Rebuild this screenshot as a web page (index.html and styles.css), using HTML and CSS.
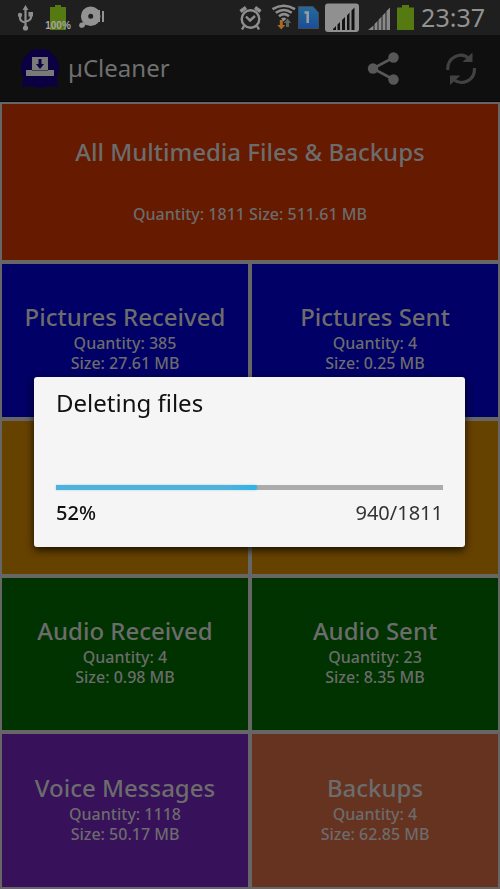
FILE: index.html
```html
<!DOCTYPE html>
<html lang="en">
<head>
<meta charset="utf-8">
<meta name="viewport" content="width=device-width, initial-scale=1">
<title>µCleaner</title>
<link rel="stylesheet" href="styles.css">
</head>
<body>
<div class="screen">
  <div class="status-bar">
    <div class="status-group notices">
      <svg width="25" height="35" viewBox="13 0 25 35" aria-hidden="true">
        <g fill="none" stroke="#8e8e8e" stroke-width="2.200"><path d="M25.500 9v18M20 15v3q0 3.500 5.500 4.500M31 14v3q0 3.500-5.500 4.500"/></g>
        <g fill="#8e8e8e"><path d="M25.500 5l3 5h-6z"/><circle cx="20" cy="15" r="2.200"/><path d="M28.500 12h4.500v4.500h-4.500z"/><circle cx="25.500" cy="28" r="2.600"/></g>
      </svg>
      <div class="charge">
        <svg width="26" height="35" viewBox="45 0 26 35" aria-hidden="true"><path fill="#567a12" d="M50 7h5V5h6v2h5v23H50z"/></svg>
        <span class="charge-label">100%</span>
      </div>
      <svg width="27" height="35" viewBox="78 0 27 35" aria-hidden="true">
        <path fill="#929292" fill-rule="evenodd" d="M90.700 6.500a9.800 9.800 0 1 1 0 19.600 9.800 9.800 0 0 1 0-19.600zM90.700 13.700a2.500 2.500 0 1 0 0 5 2.500 2.500 0 0 0 0-5z"/>
        <circle cx="81.800" cy="25.200" r="2.600" fill="#929292"/>
        <path fill="#929292" d="M82 22l4 2-2 3zM102 11h2v11h-2zM98 10h2v12h-2z"/>
      </svg>
    </div>
    <div class="status-group">
      <svg width="29" height="35" viewBox="236 0 29 35" aria-hidden="true">
        <g fill="none" stroke="#8e8e8e" stroke-width="2.400"><circle cx="248.500" cy="19" r="8.800"/><path d="M244 16.500l4 4 5-4.500M242 26l-2 3.500M255 26l2 3.500"/><path stroke-width="3.600" d="M238.500 11.500l5.500-4M258.500 11.500l-5.500-4"/></g>
      </svg>
      <svg width="30" height="35" viewBox="265 0 30 35" aria-hidden="true">
        <g fill="none" stroke="#8e8e8e" stroke-width="2.600"><path d="M270.500 9.200q11.300-7 22.500 0M273.800 12.800q8-5.600 16 0M277 16.200q5-4 10 0"/></g>
        <path fill="#8e8e8e" d="M279 18.500q3-2 5.500 0l-3 3z"/>
        <path fill="#a66a23" d="M277.800 20h3v5h2.500l-4 4.500-4-4.500h2.500z"/>
        <path fill="#626262" d="M285.500 18.500l3.700 4.500h-2.200v4h-3v-4h-2.200z"/>
      </svg>
      <svg width="25" height="35" viewBox="295 0 25 35" aria-hidden="true">
        <defs><linearGradient id="sim" x2="0" y2="1"><stop stop-color="#236b9c"/><stop offset="1" stop-color="#1b4d9a"/></linearGradient></defs>
        <path fill="url(#sim)" stroke="#454b52" d="M296.500 6.500h14.500l5.500 6v16h-20z"/>
        <path fill="none" stroke="#9b9b9b" stroke-width="2.600" d="M302.500 12.500h3.200V23"/>
      </svg>
      <svg width="41" height="35" viewBox="320 0 41 35" aria-hidden="true">
        <rect x="323" y="3.500" width="34" height="28.500" rx="3" fill="#909090"/>
        <path fill="#111" d="M331 30v-1l3-3v4zM335.500 30v-5.500l2.500-2.500v8zM340 30v-10l3-3v13zM345 30V15.500l2.500-3V30zM349.500 30V10.500l3-3V30z"/>
      </svg>
      <svg width="30" height="35" viewBox="361 0 30 35" aria-hidden="true">
        <path fill="#898989" d="M366 30l5.500-4.500V30zM372.500 30v-6l3-3v9zM376.500 30V20l3-3.500V30zM380.500 30V15.500l3-3V30zM384.500 30V11l3.500-3.500V30z"/>
      </svg>
      <svg width="26" height="35" viewBox="391 0 26 35" aria-hidden="true"><path fill="#567a12" d="M395 7.500h5V5h7v2.500h5V30h-17z"/></svg>
      <time class="clock">23:37</time>
    </div>
  </div>

  <header class="app-bar">
    <svg class="logo" width="40" height="40" viewBox="20 48 40 40" aria-hidden="true">
      <path fill="#0b0042" d="M40 49a19 19 0 0 1 16.500 28.500Q56 83 59 87.500q-4.500-2-9.500-1.500-9.500 3.500-19 0-5-.5-9.500 1.500 3-4.500 2.500-10A19 19 0 0 1 40 49z"/>
      <path fill="#7a7a7a" d="M32 57h16v13h6v6H26v-6h6z"/>
      <path fill="#444" d="M32 70h16v1H32z"/>
      <path fill="#0b0042" d="M38.500 59h3v5h2.500l-4 5-4-5h2.500z"/>
    </svg>
    <h1 class="app-title">µCleaner</h1>
    <button class="action" aria-label="Share">
      <svg width="36" height="40" viewBox="366 48 36 40" aria-hidden="true">
        <path fill="none" stroke="#585858" stroke-width="2.600" d="M393.500 57.500L373 68.500l20.500 11"/>
        <g fill="#585858"><circle cx="393.500" cy="57.500" r="5.200"/><circle cx="373" cy="68.500" r="5.200"/><circle cx="393.500" cy="79.500" r="5.200"/></g>
      </svg>
    </button>
    <button class="action" aria-label="Refresh">
      <svg width="36" height="40" viewBox="443 48 36 40" aria-hidden="true">
        <path fill="none" stroke="#414141" stroke-width="3.200" d="M447.700 70C447 57 461 51 469 58.500M474.500 68C475 81 462 86 453.500 79.500"/>
        <path fill="#414141" d="M472.500 52.500V62h-10zM450 85V75.500h10.500z"/>
      </svg>
    </button>
  </header>

  <main class="tiles">
    <button class="tile all"><span class="name">All Multimedia Files &amp; Backups</span><span class="detail">Quantity: 1811 Size: 511.61 MB</span></button>
    <button class="tile pictures"><span class="name">Pictures Received</span><span class="detail">Quantity: 385</span><span class="detail">Size: 27.61 MB</span></button>
    <button class="tile pictures"><span class="name">Pictures Sent</span><span class="detail">Quantity: 4</span><span class="detail">Size: 0.25 MB</span></button>
    <button class="tile videos" aria-label="Videos"></button>
    <button class="tile videos" aria-label="Videos"></button>
    <button class="tile audio"><span class="name">Audio Received</span><span class="detail">Quantity: 4</span><span class="detail">Size: 0.98 MB</span></button>
    <button class="tile audio"><span class="name">Audio Sent</span><span class="detail">Quantity: 23</span><span class="detail">Size: 8.35 MB</span></button>
    <button class="tile voice"><span class="name">Voice Messages</span><span class="detail">Quantity: 1118</span><span class="detail">Size: 50.17 MB</span></button>
    <button class="tile backups"><span class="name">Backups</span><span class="detail">Quantity: 4</span><span class="detail">Size: 62.85 MB</span></button>
  </main>
</div>

<div class="overlay">
  <section class="dialog" role="dialog" aria-labelledby="dialog-title">
    <h2 class="dialog-title" id="dialog-title">Deleting files</h2>
    <progress class="bar" value="52" max="100" aria-labelledby="dialog-title"></progress>
    <div class="figures"><strong>52%</strong><span class="count">940/1811</span></div>
  </section>
</div>
</body>
</html>
```

FILE: styles.css
```css
* { box-sizing: border-box; }

body {
  margin: 0;
  background: #0f0f0f;
  color: #707070;
  font-family: "Noto Sans", "Open Sans", sans-serif;
}

button {
  margin: 0;
  padding: 0;
  border: 0;
  background: none;
  color: inherit;
  font: inherit;
}

svg { display: block; }

.screen {
  display: flex;
  flex-direction: column;
  min-height: 100vh;
}

.status-bar {
  display: flex;
  justify-content: space-between;
  height: 35px;
  padding: 0 15px 0 13px;
  background: #1f1f1f;
}

.status-group {
  display: flex;
  align-items: center;
}

.notices { gap: 7px; }

.charge { position: relative; }

.charge-label {
  position: absolute;
  inset: auto 0 4px;
  color: #a5a5a5;
  font-family: "Liberation Sans", sans-serif;
  font-size: 10px;
  font-weight: 700;
  line-height: 10px;
  text-align: center;
}

.clock {
  padding-left: 2px;
  color: #929292;
  font-size: 25px;
  line-height: 35px;
}

.app-bar {
  display: flex;
  align-items: center;
  height: 67px;
  padding: 0 21px 0 20px;
  border-bottom: 1px solid #050505;
}

.app-title {
  flex: 1;
  margin: 0;
  padding-left: 8px;
  font-size: 24px;
  font-weight: 400;
  line-height: 32px;
}

.action + .action { margin-left: 41px; }

.tiles {
  flex: 1;
  display: grid;
  grid-template-columns: 1fr 1fr;
  grid-template-rows: 156px;
  grid-auto-rows: 1fr;
  gap: 4px;
  padding: 2px;
  background: #666;
}

.tile {
  display: flex;
  flex-direction: column;
  align-items: center;
  justify-content: center;
  padding-bottom: 6px;
  color: #6c6c6c;
}

.name {
  font-size: 24px;
  font-weight: 500;
  line-height: 32px;
}

.detail {
  font-size: 16px;
  font-weight: 500;
  line-height: 20px;
}

.all {
  grid-column: 1 / -1;
  gap: 36px;
  padding-bottom: 4px;
  background: #661a00;
}

.pictures { background: #000066; }
.videos { background: #664200; }
.audio { background: #003300; }
.voice { background: #37115a; }
.backups { background: #663320; }

.overlay {
  position: fixed;
  inset: 35px 0 0;
  display: flex;
  align-items: center;
  padding: 0 35px 0 34px;
}

.dialog {
  flex: 1;
  padding: 10px 22px 22px;
  border-radius: 3px;
  background: #f5f5f5;
  box-shadow: 0 3px 8px rgba(0, 0, 0, 0.8);
  color: #111;
}

.dialog-title {
  margin: 0 0 66px;
  font-size: 24px;
  font-weight: 400;
  line-height: 32px;
}

.bar {
  display: block;
  width: 100%;
  height: 5px;
  border: 0;
  appearance: none;
  background: #ababab;
}

.bar::-webkit-progress-bar { background: #ababab; }

.bar::-webkit-progress-value {
  border-radius: 0 2px 2px 0;
  background: linear-gradient(90deg, #4db2dc 85%, #2fb2e6);
  box-shadow: 0 0 2px rgba(47, 178, 230, 0.5);
}

.figures {
  display: flex;
  justify-content: space-between;
  padding-top: 11px;
  font-size: 20px;
  line-height: 24px;
}

.figures strong { font-weight: 500; }

.count { color: #333; }
```
